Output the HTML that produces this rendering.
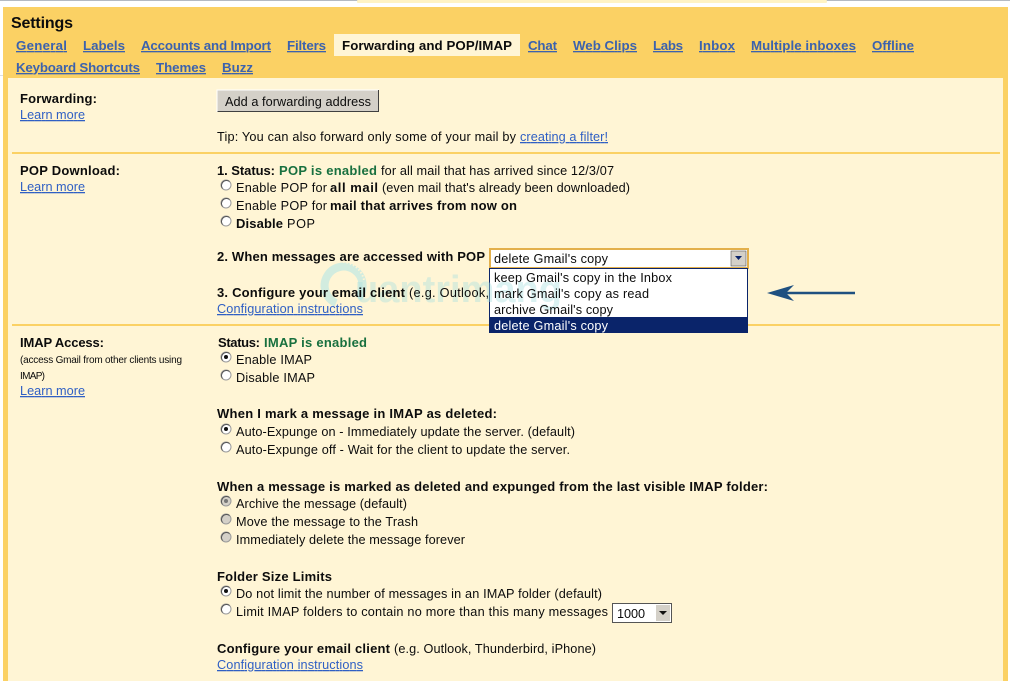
<!DOCTYPE html>
<html><head><meta charset="utf-8"><title>Settings</title>
<style>
html,body{margin:0;padding:0;background:#fff;width:1010px;height:681px;overflow:hidden}
svg{display:block}
text{font-family:"Liberation Sans",sans-serif;font-size:12.7px;fill:#0c0c0c;white-space:pre}
.b{font-weight:bold;font-size:13px}
.t{font-weight:bold;font-size:13.3px;fill:#3c62ad;text-decoration:underline}
.l{fill:#2f5fc4;text-decoration:underline}
.g{font-weight:bold;font-size:13px;fill:#18703f}
.s{font-size:10px}
</style></head><body>
<svg width="1010" height="681" viewBox="0 0 1010 681" xmlns="http://www.w3.org/2000/svg">
<rect x="0" y="0" width="1010" height="1" fill="#b4bac2"/>
<rect x="357" y="0" width="470" height="3" rx="1" fill="#fff3c4"/>
<rect x="0" y="75" width="3" height="1" fill="#dcdfe3"/>
<rect x="3" y="7" width="1005" height="674" fill="#fbd164"/>
<rect x="8" y="78" width="995" height="603" fill="#fff5d5"/>
<text x="11" y="28" class="b" style="font-size:16px" textLength="62">Settings</text>
<rect x="334" y="34" width="186" height="22" fill="#fff5d5"/>
<text x="16" y="50" class="t" textLength="51">General</text>
<text x="83" y="50" class="t" textLength="42">Labels</text>
<text x="141" y="50" class="t" textLength="130">Accounts and Import</text>
<text x="287" y="50" class="t" textLength="39">Filters</text>
<text x="342" y="50" class="b" style="font-size:13.3px" textLength="170">Forwarding and POP/IMAP</text>
<text x="528" y="50" class="t" textLength="29">Chat</text>
<text x="573" y="50" class="t" textLength="64">Web Clips</text>
<text x="653" y="50" class="t" textLength="30">Labs</text>
<text x="699" y="50" class="t" textLength="36">Inbox</text>
<text x="751" y="50" class="t" textLength="105">Multiple inboxes</text>
<text x="872" y="50" class="t" textLength="42">Offline</text>
<text x="16" y="72" class="t" textLength="124">Keyboard Shortcuts</text>
<text x="156" y="72" class="t" textLength="50">Themes</text>
<text x="222" y="72" class="t" textLength="31">Buzz</text>
<rect x="12" y="152" width="988" height="2" fill="#fbd164"/>
<rect x="12" y="324" width="988" height="2" fill="#fbd164"/>
<text x="20" y="103" class="b" textLength="77">Forwarding:</text>
<text x="20" y="119" class="l" textLength="65">Learn more</text>
<rect x="217" y="90" width="162" height="22" fill="#d4d0c8"/>
<path d="M217 112V90H379" fill="none" stroke="#fff" stroke-width="1"/>
<path d="M217.5 111.5H378.5V90" fill="none" stroke="#404040" stroke-width="1"/>
<text x="225" y="106" textLength="146">Add a forwarding address</text>
<text x="217" y="141" textLength="299">Tip: You can also forward only some of your mail by</text>
<text x="520" y="141" class="l" textLength="88">creating a filter!</text>
<text x="20" y="175" class="b" textLength="100">POP Download:</text>
<text x="20" y="191" class="l" textLength="65">Learn more</text>
<text x="217" y="175" class="b" textLength="58">1. Status:</text>
<text x="279" y="175" class="g" textLength="98">POP is enabled</text>
<text x="381" y="175" textLength="233">for all mail that has arrived since 12/3/07</text>
<text x="236" y="192" textLength="91">Enable POP for</text>
<text x="330" y="192" class="b" textLength="48">all mail</text>
<text x="382" y="192" textLength="248">(even mail that's already been downloaded)</text>
<text x="236" y="210" textLength="91">Enable POP for</text>
<text x="330" y="210" class="b" textLength="187">mail that arrives from now on</text>
<text x="236" y="228" class="b" textLength="47">Disable</text>
<text x="287" y="228" textLength="28">POP</text>
<rect x="489" y="248" width="260" height="21" fill="#e3b04c"/>
<rect x="491" y="250" width="256" height="17" fill="#fff"/>
<rect x="731" y="251" width="15" height="15" fill="#d4d0c8" stroke="#555" stroke-width="0.6"/>
<path d="M735 256h7l-3.500 4z" fill="#0a246a"/>
<rect x="489.500" y="268.500" width="258" height="64" fill="#fff" stroke="#0a246a"/>
<rect x="490" y="317" width="258" height="16" fill="#0a246a"/>
<g>
<path d="M336 303A19 19 0 1 1 358 298" fill="none" stroke="#d2ecdf" stroke-width="8"/>
<path d="M343 262A23 23 0 0 1 364 280" fill="none" stroke="#fff5d5" stroke-width="2" stroke-dasharray="1.500 2"/>
<text x="355" y="302" style="font-size:38px;font-weight:bold;fill:#a9dfe0;fill-opacity:.42" textLength="207" lengthAdjust="spacingAndGlyphs">uantrimang</text>
</g>
<text x="217" y="261" class="b" textLength="268">2. When messages are accessed with POP</text>
<text x="217" y="297" class="b" textLength="188">3. Configure your email client</text>
<text x="409" y="297" textLength="80">(e.g. Outlook,</text>
<text x="217" y="313" class="l" textLength="146">Configuration instructions</text>
<text x="494" y="263" textLength="114">delete Gmail's copy</text>
<text x="494" y="282" textLength="178">keep Gmail's copy in the Inbox</text>
<text x="494" y="298" textLength="155">mark Gmail's copy as read</text>
<text x="494" y="314" textLength="119">archive Gmail's copy</text>
<text x="494" y="330" textLength="114" style="fill:#fff">delete Gmail's copy</text>
<path d="M780 293H855" stroke="#1f5080" stroke-width="2.500"/>
<path d="M767 293L794 285L786 293L794 301Z" fill="#1f5080"/>
<text x="20" y="347" class="b" textLength="84">IMAP Access:</text>
<text x="20" y="363" class="s" textLength="162">(access Gmail from other clients using</text>
<text x="20" y="379" class="s" textLength="25">IMAP)</text>
<text x="20" y="395" class="l" textLength="65">Learn more</text>
<text x="218" y="347" class="b" textLength="42">Status:</text>
<text x="264" y="347" class="g" textLength="103">IMAP is enabled</text>
<text x="236" y="364" textLength="76">Enable IMAP</text>
<text x="236" y="382" textLength="79">Disable IMAP</text>
<text x="217" y="418" class="b" textLength="280">When I mark a message in IMAP as deleted:</text>
<text x="236" y="436" textLength="339">Auto-Expunge on - Immediately update the server. (default)</text>
<text x="236" y="454" textLength="334">Auto-Expunge off - Wait for the client to update the server.</text>
<text x="217" y="491" class="b" textLength="551">When a message is marked as deleted and expunged from the last visible IMAP folder:</text>
<text x="236" y="508" textLength="171">Archive the message (default)</text>
<text x="236" y="526" textLength="182">Move the message to the Trash</text>
<text x="236" y="544" textLength="229">Immediately delete the message forever</text>
<text x="217" y="581" class="b" textLength="115">Folder Size Limits</text>
<text x="236" y="598" textLength="366">Do not limit the number of messages in an IMAP folder (default)</text>
<text x="236" y="616" textLength="372">Limit IMAP folders to contain no more than this many messages</text>
<rect x="612.500" y="603.500" width="59" height="19" fill="#fff" stroke="#555"/>
<rect x="656" y="605" width="14" height="16" fill="#d4d0c8"/>
<path d="M659 611h8l-4 4z" fill="#111"/>
<text x="617" y="618" textLength="28">1000</text>
<text x="217" y="653" class="b" textLength="173">Configure your email client</text>
<text x="394" y="653" textLength="202">(e.g. Outlook, Thunderbird, iPhone)</text>
<text x="217" y="669" class="l" textLength="146">Configuration instructions</text>
<g fill="#fff" stroke="#9a9a9a" stroke-width="1">
<circle cx="226" cy="185" r="5"/><circle cx="226" cy="203" r="5"/><circle cx="226" cy="221" r="5"/>
<circle cx="226" cy="357" r="5"/><circle cx="226" cy="375" r="5"/>
<circle cx="226" cy="429" r="5"/><circle cx="226" cy="447" r="5"/>
<circle cx="226" cy="591" r="5"/><circle cx="226" cy="609" r="5"/>
</g>
<g fill="#d4d0c8" stroke="#9a9a9a" stroke-width="1">
<circle cx="226" cy="501" r="5"/><circle cx="226" cy="519" r="5"/><circle cx="226" cy="537" r="5"/>
</g>
<g fill="none" stroke="#555" stroke-width="1">
<path d="M222.500 188.500A5 5 0 0 1 229.500 181.500M222.500 206.500A5 5 0 0 1 229.500 199.500M222.500 224.500A5 5 0 0 1 229.500 217.500M222.500 360.500A5 5 0 0 1 229.500 353.500M222.500 378.500A5 5 0 0 1 229.500 371.500M222.500 432.500A5 5 0 0 1 229.500 425.500M222.500 450.500A5 5 0 0 1 229.500 443.500M222.500 504.500A5 5 0 0 1 229.500 497.500M222.500 522.500A5 5 0 0 1 229.500 515.500M222.500 540.500A5 5 0 0 1 229.500 533.500M222.500 594.500A5 5 0 0 1 229.500 587.500M222.500 612.500A5 5 0 0 1 229.500 605.500"/>
</g>
<g fill="#111">
<circle cx="226" cy="357" r="2"/><circle cx="226" cy="429" r="2"/><circle cx="226" cy="591" r="2"/>
</g>
<circle cx="226" cy="501" r="2" fill="#777"/>
</svg>
</body></html>
